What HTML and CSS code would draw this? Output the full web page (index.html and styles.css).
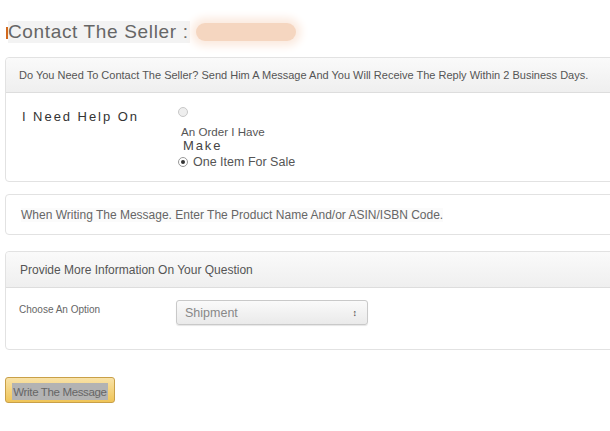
FILE: index.html
```html
<!DOCTYPE html>
<html>
<head>
<meta charset="utf-8">
<link rel="stylesheet" href="styles.css">
</head>
<body>
<div class="page">
  <h1 class="title"><span class="mark"></span><span class="title-text">Contact The Seller :</span><span class="blur"></span></h1>

  <section class="panel">
    <div class="panel-head small">Do You Need To Contact The Seller? Send Him A Message And You Will Receive The Reply Within 2 Business Days.</div>
    <div class="panel-body help">
      <div class="help-label">I Need Help On</div>
      <div class="options">
        <span class="radio"></span>
        <div class="opt-a">An Order I Have</div>
        <div class="opt-b">Make</div>
        <div class="opt-c"><span class="radio checked"></span>One Item For Sale</div>
      </div>
    </div>
  </section>

  <section class="panel note">
    <div class="note-text">When Writing The Message. Enter The Product Name And/or ASIN/ISBN Code.</div>
  </section>

  <section class="panel more">
    <div class="panel-head tall">Provide More Information On Your Question</div>
    <div class="panel-body choose">
      <div class="choose-label">Choose An Option</div>
      <div class="select"><span>Shipment</span><span class="arrows">&#8597;</span></div>
    </div>
  </section>

  <button class="btn"><span>Write The Message</span></button>
</div>
</body>
</html>
```

FILE: styles.css
```css
html, body {
  margin: 0;
  padding: 0;
  background: #fff;
  overflow: hidden;
  width: 610px;
  height: 431px;
}
.page {
  font-family: "Liberation Sans", Arial, sans-serif;
  color: #555;
  padding: 0 0 0 5px;
}
.title {
  margin: 0;
  padding-top: 18px;
  height: 27px;
  display: flex;
  align-items: center;
  font-weight: normal;
  font-size: 19px;
  color: #666;
}
.mark {
  width: 2px;
  height: 12px;
  background: #d2691e;
  margin-left: 1px;
  margin-top: 2px;
}
.title-text {
  background: #f3f3f3;
  padding: 0 1px 0 0;
  letter-spacing: 0.65px;
}
.blur {
  width: 100px;
  height: 18px;
  margin-left: 6px;
  border-radius: 9px;
  background: #f5d6c0;
  box-shadow: 0 0 8px 5px #fbeadf;
}
.panel {
  margin-top: 12px;
  width: 640px;
  border: 1px solid #e2e2e2;
  border-radius: 4px;
  box-sizing: border-box;
}
.panel.more {
  margin-top: 16px;
}
.panel-head {
  background: linear-gradient(#fafafa, #efefef);
  border-bottom: 1px solid #ddd;
  height: 34px;
  display: flex;
  align-items: center;
  padding-left: 14px;
  font-size: 12px;
  color: #555;
  border-radius: 4px 4px 0 0;
}
.panel-head.tall {
  height: 35px;
}
.panel-head.small {
  font-size: 11px;
  padding-left: 13px;
}
.help {
  display: flex;
  padding: 14px 0 11px 16px;
}
.help-label {
  width: 156px;
  font-size: 13px;
  letter-spacing: 1.95px;
  color: #333;
  padding-top: 2px;
}
.options {
  font-size: 11px;
  color: #555;
}
.radio {
  display: block;
  width: 10px;
  height: 10px;
  border-radius: 50%;
  border: 1px solid #c8c8c8;
  background: #eee;
  box-sizing: border-box;
  position: relative;
}
.radio.checked {
  border-color: #999;
  background: #fff;
  margin-right: 5px;
  flex: none;
}
.radio.checked::after {
  content: "";
  position: absolute;
  left: 2px;
  top: 2px;
  width: 4px;
  height: 4px;
  border-radius: 50%;
  background: #333;
}
.opt-a {
  margin-top: 8px;
  font-size: 11.6px;
  margin-left: 3px;
}
.opt-b {
  font-size: 13px;
  letter-spacing: 1.9px;
  color: #444;
  margin-left: 5px;
  line-height: 16px;
}
.opt-c {
  font-size: 12.5px;
  display: flex;
  align-items: center;
  line-height: 16px;
}
.note {
  height: 41px;
  display: flex;
  align-items: center;
  padding-left: 15px;
}
.note-text {
  font-size: 12px;
  color: #666;
  background: #fbfbfb;
}
.choose {
  display: flex;
  align-items: flex-start;
  padding: 12px 0 24px 13px;
}
.choose-label {
  width: 157px;
  font-size: 10px;
  color: #666;
  padding-top: 4px;
}
.select {
  width: 192px;
  height: 25px;
  border: 1px solid #c9c9c9;
  border-radius: 3px;
  background: linear-gradient(#fafafa, #eaeaea);
  box-sizing: border-box;
  display: flex;
  align-items: center;
  justify-content: space-between;
  padding: 0 10px 0 8px;
  font-size: 12.5px;
  color: #888;
  box-shadow: 0 1px 1px rgba(0,0,0,0.1);
}
.arrows {
  font-size: 9px;
  color: #333;
  font-weight: bold;
}
.btn {
  margin-top: 27px;
  width: 110px;
  height: 26px;
  border: 1px solid #c9a048;
  border-radius: 3px;
  background: linear-gradient(#f8e2a8, #f0c557);
  padding: 0;
  font-family: "Liberation Sans", Arial, sans-serif;
  font-size: 11.5px;
  letter-spacing: -0.35px;
  color: #666;
  display: flex;
  align-items: center;
  justify-content: center;
}
.btn span {
  background: #b3b3b3;
  padding: 2px 1px 0;
  line-height: 15px;
  margin-top: 3px;
}
```
